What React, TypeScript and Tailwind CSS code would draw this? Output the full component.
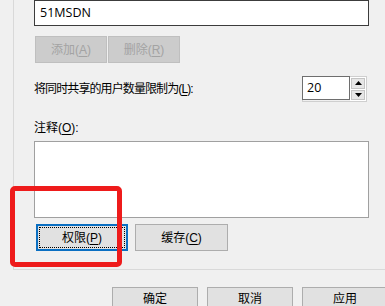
const font = '[font-family:"Liberation_Sans","Noto_Sans_CJK_SC",sans-serif]';

function Key({ label, k }: { label: string; k: string }) {
  return (
    <span>
      {label}(<span className="underline underline-offset-2">{k}</span>)
    </span>
  );
}

function Triangle({ up }: { up?: boolean }) {
  return (
    <svg width="7" height="4" viewBox="0 0 7 4">
      <path d={up ? 'M0 4 L3.5 0 L7 4 Z' : 'M0 0 L3.5 4 L7 0 Z'} fill="#000" />
    </svg>
  );
}

export default function App() {
  return (
    <div
      className={`relative w-[385px] h-[306px] overflow-hidden bg-[#f0f0f0] text-[12px] text-black ${font}`}
    >
      {/* tab page */}
      <div className="ml-[13px] h-[270px] border-l border-b border-[#d9d9d9] pl-[20px]">
        <div className="w-[335px] h-[26px] border border-[#3c3c3c] bg-white flex items-center pl-[5px] text-[12.5px] [font-family:'Open_Sans',sans-serif]">
          51MSDN
        </div>

        <div className="flex gap-[1px] mt-[10px] ml-[1px]">
          <div className="w-[72px] h-[27px] flex items-center justify-center bg-[#cccccc] border border-[#bfbfbf] text-[#a3a3a3]">
            <Key label="添加" k="A" />
          </div>
          <div className="w-[72px] h-[27px] flex items-center justify-center bg-[#cccccc] border border-[#bfbfbf] text-[#a3a3a3]">
            <Key label="删除" k="R" />
          </div>
        </div>

        <div className="flex items-center w-[333px] mt-[13px] h-[26px]">
          <span className="mt-[-1px] tracking-[-0.9px]">
            将同时共享的用户数量限制为<Key label="" k="L" />:
          </span>
          <div className="ml-auto flex h-[26px] border border-[#cfcfcf]">
            <div className="w-[48px] h-full border border-[#6e6e6e] -m-[1px] mr-0 bg-white flex items-center pl-[4px] [font-family:'Open_Sans',sans-serif] text-[12.5px]">
              20
            </div>
            <div className="w-[16px] flex flex-col gap-[1px] p-[1px] bg-white">
              <div className="flex-1 flex items-center justify-center bg-[#e6e6e6] border border-[#c4c4c4]">
                <Triangle up />
              </div>
              <div className="flex-1 flex items-center justify-center bg-[#e6e6e6] border border-[#c4c4c4]">
                <Triangle />
              </div>
            </div>
          </div>
        </div>

        <div className="mt-[18px] h-[16px] flex items-center">
          <Key label="注释" k="O" />:
        </div>
        <div className="mt-[5px] w-[335px] h-[77px] border border-[#a0a0a0] bg-white" />

        <div className="flex gap-[7px] mt-[6px] ml-[2px]">
          <div className="w-[92px] h-[27px] border-[2px] border-[#0a6fc2] bg-[#e1e1e1] p-[1px]">
            <div className="w-full h-full border border-dotted border-black flex items-center justify-center">
              <Key label="权限" k="P" />
            </div>
          </div>
          <div className="w-[93px] h-[27px] border border-[#adadad] bg-[#e1e1e1] flex items-center justify-center">
            <Key label="缓存" k="C" />
          </div>
        </div>
      </div>

      {/* dialog buttons */}
      <div className="flex gap-[9px] pl-[112px] mt-[17px]">
        <div className="w-[86px] h-[24px] shrink-0 border border-[#adadad] bg-[#e1e1e1] flex items-center justify-center">
          确定
        </div>
        <div className="w-[86px] h-[24px] shrink-0 border border-[#adadad] bg-[#e1e1e1] flex items-center justify-center">
          取消
        </div>
        <div className="w-[86px] h-[24px] shrink-0 border border-[#adadad] bg-[#e1e1e1] flex items-center justify-center">
          应用
        </div>
      </div>

      {/* red annotation */}
      <div className="absolute left-[10px] top-[186px] w-[112px] h-[81px] border-[5px] border-[#ee1b1b] rounded-[5px]" />
    </div>
  );
}
